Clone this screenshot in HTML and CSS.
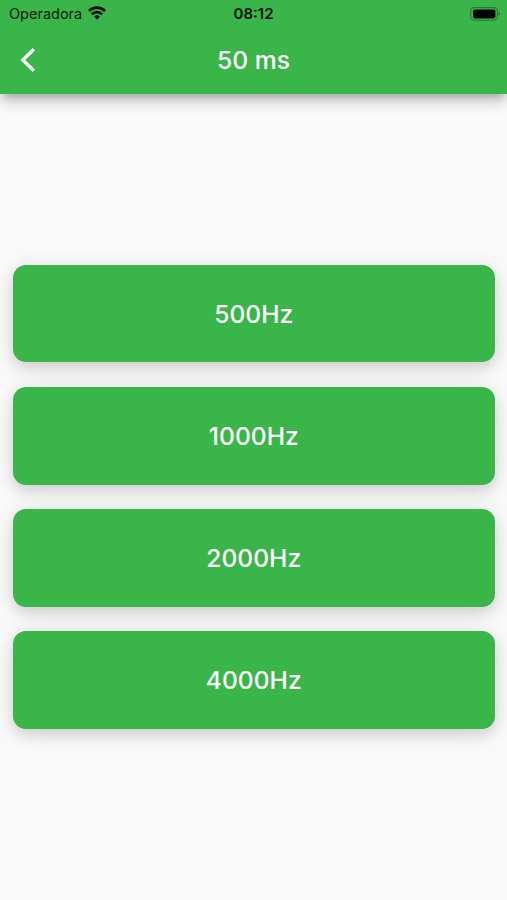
FILE: index.html
```html
<!DOCTYPE html>
<html lang="pt">
<head>
<meta charset="utf-8">
<title>50 ms</title>
<link rel="stylesheet" href="styles.css">
</head>
<body>
<header class="header">
  <div class="status">
    <div class="carrier"><span>Operadora</span>
      <svg class="wifi" viewBox="0 0 18 14" width="18" height="14"><g fill="none" stroke="#031006" stroke-width="2.7"><path d="M.9 5a11.6 11.6 0 0 1 16.2 0"/><path d="M3.8 8.3a7.4 7.4 0 0 1 10.4 0"/></g><path fill="#031006" d="M9 13.6 6.1 10.7a4.2 4.2 0 0 1 5.8 0z"/></svg>
    </div>
    <div class="time">08:12</div>
    <div class="power"><svg class="battery" viewBox="0 0 31 14" width="31" height="14"><rect x=".6" y=".6" width="26.8" height="12.6" rx="3.8" fill="none" stroke="#257a33" stroke-width="1.1"/><rect x="3" y="2.4" width="22.4" height="9" rx="1.8" fill="#000"/><path d="M28.6 4.8c2.2.8 2.2 3.4 0 4.2z" fill="#257a33"/></svg></div>
  </div>
  <div class="bar">
    <svg class="back" viewBox="0 0 16 26" width="16" height="26"><path d="M13.8 2.2 2.8 13l11 10.8" fill="none" stroke="#fff" stroke-width="3.3"/></svg>
    <h1 class="title">50 ms</h1>
  </div>
</header>
<main class="list">
  <button class="card">500Hz</button>
  <button class="card">1000Hz</button>
  <button class="card">2000Hz</button>
  <button class="card">4000Hz</button>
</main>
</body>
</html>
```
FILE: styles.css
```css
* { box-sizing: border-box; }
body { margin: 0; height: 900px; display: flex; flex-direction: column; background: #fafafa; font-family: Inter, sans-serif; overflow: hidden; }
.header { height: 93.6px; flex: none; background: #3ab54a; box-shadow: 0 7px 7px -4px rgba(0,0,0,.18), 0 9px 13px -1px rgba(0,0,0,.15), 0 4px 18px 2px rgba(0,0,0,.06); }
.status { height: 27px; display: grid; grid-template-columns: 1fr auto 1fr; align-items: center; padding: 0 6px 0 9px; color: #052009; font-size: 14.5px; }
.carrier { display: flex; align-items: center; gap: 6px; }
.wifi { margin-top: -2px; }
.time { margin-left: -3px; font-weight: 600; font-size: 15px; color: #021005; }
.power { display: flex; justify-content: flex-end; }
.bar { height: 65px; display: grid; grid-template-columns: 40px 1fr 40px; align-items: center; padding: 0 20px; }
.title { margin: 0; text-align: center; color: #fff; font-size: 24.7px; font-weight: 500; line-height: 30px; }
.list { flex: 1; display: flex; flex-direction: column; justify-content: center; gap: 24.5px; padding: 0 12.5px 0 13px; }
.card { height: 97.6px; padding: 0; border: 0; border-radius: 13px; background: #3ab54a; color: #fff; font: 500 24.6px Inter, sans-serif; box-shadow: 0 6px 12px rgba(0,0,0,.09), 0 4px 24px 1px rgba(0,0,0,.11); }
```
